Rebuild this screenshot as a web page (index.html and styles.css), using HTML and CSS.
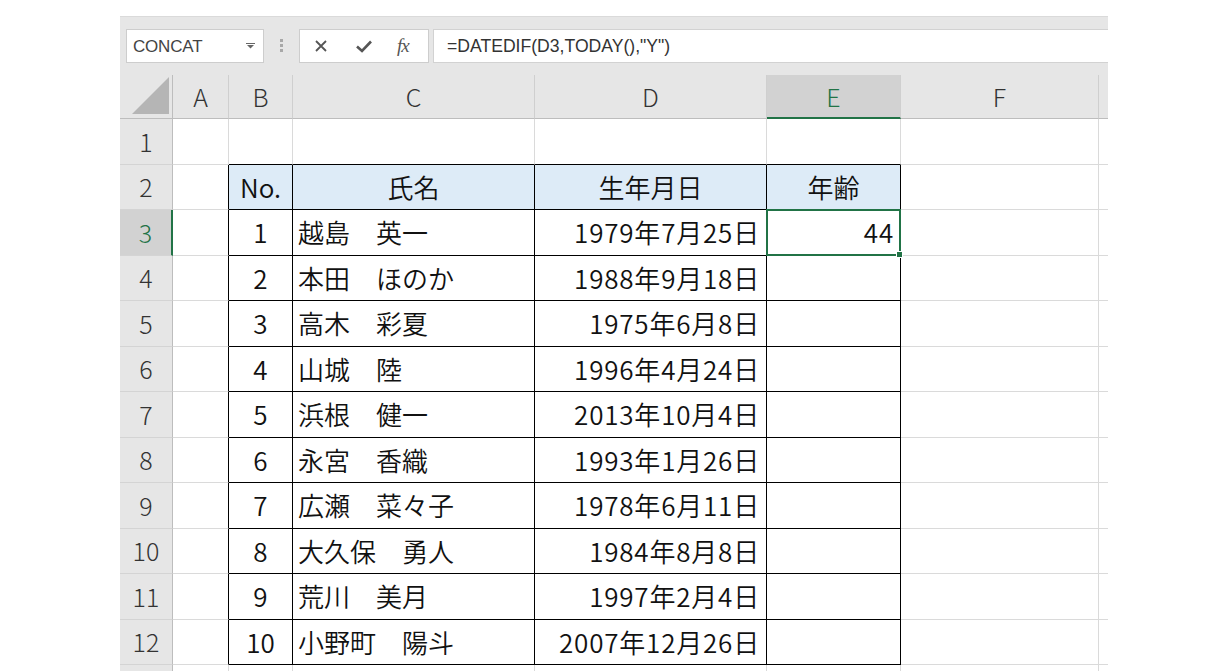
FILE: index.html
```html
<!DOCTYPE html>
<html lang="ja">
<head>
<meta charset="utf-8">
<title>Excel DATEDIF</title>
<link rel="stylesheet" href="styles.css">
</head>
<body>
<div class="app">
  <div class="fbar">
    <div class="namebox">
      <span class="nb-text">CONCAT</span>
      <svg class="nb-arrow" width="9" height="6" viewBox="0 0 9 6"><rect x="0" y="0" width="9" height="1" fill="#666"/><polygon points="1,2 8,2 4.5,5.5" fill="#666"/></svg>
    </div>
    <div class="dots"><i></i><i></i><i></i></div>
    <div class="fxbox">
      <svg class="ic" width="16" height="16" viewBox="0 0 16 16"><path d="M3 3 L13 13 M13 3 L3 13" stroke="#555" stroke-width="1.8" fill="none"/></svg>
      <svg class="ic" width="18" height="16" viewBox="0 0 18 16"><path d="M2 8.5 L7 13 L16 3.5" stroke="#555" stroke-width="2.6" fill="none" stroke-linejoin="miter"/></svg>
      <span class="fx">fx</span>
    </div>
    <div class="formula">=DATEDIF(D3,TODAY(),"Y")</div>
  </div>

  <div class="grid">
    <div class="ch corner"><svg width="37" height="37" viewBox="0 0 37 37"><polygon points="37,0 37,37 0,37" fill="#b5b5b5"/></svg></div>
    <div class="ch">A</div>
    <div class="ch">B</div>
    <div class="ch">C</div>
    <div class="ch">D</div>
    <div class="ch ch-sel">E</div>
    <div class="ch">F</div>
    <div class="ch ch-end"></div>

    <div class="rh">1</div>
    <div class="c"></div><div class="c tb"></div><div class="c tb"></div><div class="c tb"></div><div class="c tb"></div><div class="c"></div><div class="c end"></div>

    <div class="rh">2</div>
    <div class="c al"></div><div class="c t th center">No.</div><div class="c t th center">氏名</div><div class="c t th center">生年月日</div><div class="c t th center">年齢</div><div class="c"></div><div class="c end"></div>

    <div class="rh rh-sel">3</div>
    <div class="c al"></div><div class="c t center">1</div><div class="c t left">越島　英一</div><div class="c t right">1979年7月25日</div><div class="c t right sel">44<span class="handle"></span></div><div class="c"></div><div class="c end"></div>

    <div class="rh">4</div>
    <div class="c al"></div><div class="c t center">2</div><div class="c t left">本田　ほのか</div><div class="c t right">1988年9月18日</div><div class="c t"></div><div class="c"></div><div class="c end"></div>

    <div class="rh">5</div>
    <div class="c al"></div><div class="c t center">3</div><div class="c t left">高木　彩夏</div><div class="c t right">1975年6月8日</div><div class="c t"></div><div class="c"></div><div class="c end"></div>

    <div class="rh">6</div>
    <div class="c al"></div><div class="c t center">4</div><div class="c t left">山城　陸</div><div class="c t right">1996年4月24日</div><div class="c t"></div><div class="c"></div><div class="c end"></div>

    <div class="rh">7</div>
    <div class="c al"></div><div class="c t center">5</div><div class="c t left">浜根　健一</div><div class="c t right">2013年10月4日</div><div class="c t"></div><div class="c"></div><div class="c end"></div>

    <div class="rh">8</div>
    <div class="c al"></div><div class="c t center">6</div><div class="c t left">永宮　香織</div><div class="c t right">1993年1月26日</div><div class="c t"></div><div class="c"></div><div class="c end"></div>

    <div class="rh">9</div>
    <div class="c al"></div><div class="c t center">7</div><div class="c t left">広瀬　菜々子</div><div class="c t right">1978年6月11日</div><div class="c t"></div><div class="c"></div><div class="c end"></div>

    <div class="rh">10</div>
    <div class="c al"></div><div class="c t center">8</div><div class="c t left">大久保　勇人</div><div class="c t right">1984年8月8日</div><div class="c t"></div><div class="c"></div><div class="c end"></div>

    <div class="rh">11</div>
    <div class="c al"></div><div class="c t center">9</div><div class="c t left">荒川　美月</div><div class="c t right">1997年2月4日</div><div class="c t"></div><div class="c"></div><div class="c end"></div>

    <div class="rh">12</div>
    <div class="c al"></div><div class="c t center">10</div><div class="c t left">小野町　陽斗</div><div class="c t right">2007年12月26日</div><div class="c t"></div><div class="c"></div><div class="c end"></div>

    <div class="rh"></div>
    <div class="c"></div><div class="c"></div><div class="c"></div><div class="c"></div><div class="c"></div><div class="c"></div><div class="c end"></div>
  </div>
</div>
</body>
</html>
```

FILE: styles.css
```css
html, body {
  margin: 0;
  padding: 0;
  background: #ffffff;
  overflow: hidden;
  height: 671px;
}

.app {
  margin-left: 120px;
  margin-top: 16px;
  width: 988px;
  font-family: "Noto Sans CJK JP", "Noto Sans", sans-serif;
}

/* formula bar */
.fbar {
  box-sizing: border-box;
  height: 59px;
  background: #e6e6e6;
  border-top: 1px solid #dadada;
  display: flex;
  align-items: flex-start;
  padding: 12px 0 0 6px;
}

.namebox {
  box-sizing: border-box;
  width: 138px;
  height: 34px;
  background: #fff;
  border: 1px solid #cdcdcd;
  display: flex;
  align-items: center;
  justify-content: space-between;
  padding: 0 8px 0 6px;
}

.nb-text {
  font-family: "Liberation Sans", Arial, sans-serif;
  font-size: 17px;
  color: #444;
  letter-spacing: -0.2px;
  padding-top: 2px;
}

.nb-arrow {
  display: block;
}

.dots {
  width: 35px;
  display: flex;
  flex-direction: column;
  align-items: center;
  gap: 2px;
  padding-top: 10px;
}

.dots i {
  display: block;
  width: 3px;
  height: 3px;
  background: #a8a8a8;
}

.fxbox {
  box-sizing: border-box;
  width: 130px;
  height: 34px;
  background: #fff;
  border: 1px solid #cdcdcd;
  display: flex;
  align-items: center;
  padding-left: 13px;
}

.fxbox .ic {
  display: block;
}

.fxbox .ic:first-child {
  margin-right: 26px;
}

.fxbox .ic:nth-child(2) {
  margin-right: 24px;
}

.fx {
  font-family: "Liberation Serif", "Times New Roman", serif;
  font-style: italic;
  font-size: 19px;
  color: #555;
  letter-spacing: -1px;
  line-height: 1;
  margin-top: -2px;
}

.formula {
  box-sizing: border-box;
  margin-left: 4px;
  flex: 1;
  height: 34px;
  background: #fff;
  border: 1px solid #d2d2d2;
  border-right: none;
  display: flex;
  align-items: center;
  padding-left: 13px;
  font-family: "Liberation Sans", Arial, sans-serif;
  font-size: 17.6px;
  color: #333;
}

/* sheet grid */
.grid {
  display: grid;
  grid-template-columns: 53px 56px 64px 242px 232px 134px 198px 9px;
  grid-template-rows: 44px repeat(13, 45.5px);
}

.ch {
  box-sizing: border-box;
  background: #e6e6e6;
  border-right: 1px solid #cfcfcf;
  border-bottom: 1px solid #bdbdbd;
  display: flex;
  align-items: center;
  justify-content: center;
  font-size: 25px;
  font-weight: 300;
  color: #333;
  line-height: 1;
}

.ch.corner {
  align-items: flex-end;
  justify-content: flex-end;
  padding: 0 3px 4px 0;
  border-right: 1px solid #bdbdbd;
}

.ch.corner svg {
  display: block;
}

.ch-sel {
  background: #d2d2d2;
  color: #217346;
  border-bottom: 2px solid #217346;
}

.ch-end {
  border-right: none;
}

.rh {
  box-sizing: border-box;
  background: #e6e6e6;
  border-right: 1px solid #bdbdbd;
  border-bottom: 1px solid #d4d4d4;
  display: flex;
  align-items: center;
  justify-content: center;
  font-size: 25px;
  font-weight: 300;
  color: #333;
  line-height: 1;
}

.rh-sel {
  background: #d2d2d2;
  color: #217346;
  border-right: 2px solid #217346;
}

.c {
  box-sizing: border-box;
  border-right: 1px solid #dadada;
  border-bottom: 1px solid #dadada;
  display: flex;
  align-items: center;
  font-size: 26px;
  font-weight: 350;
  color: #111;
  line-height: 1;
  white-space: nowrap;
  position: relative;
}

.c.end {
  border-right: none;
}

.c.al {
  border-right-color: #000;
}

.c.tb {
  border-bottom-color: #000;
}

.c.t {
  border-right-color: #000;
  border-bottom-color: #000;
}

.c.th {
  background: #ddebf7;
}

.center {
  justify-content: center;
}

.left {
  justify-content: flex-start;
  padding-left: 5px;
}

.right {
  justify-content: flex-end;
  padding-right: 6px;
  letter-spacing: 0.8px;
}

.sel::after {
  content: "";
  position: absolute;
  left: -1px;
  top: -1px;
  right: -1px;
  bottom: -1px;
  border: 2px solid #217346;
  pointer-events: none;
}

.handle {
  position: absolute;
  right: -3px;
  bottom: -3px;
  width: 5px;
  height: 5px;
  background: #217346;
  border: 1px solid #fff;
  z-index: 2;
}
```
